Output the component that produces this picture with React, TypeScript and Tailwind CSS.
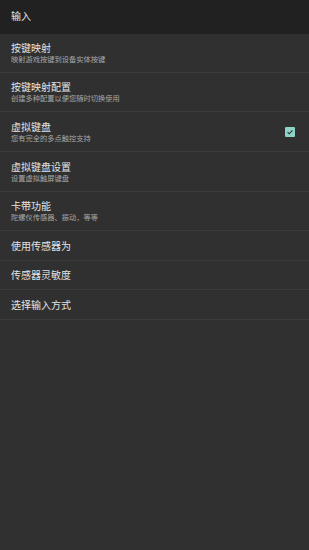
import React from 'react';

type Item = { title: string; subtitle?: string; checked?: boolean; h: string };

const items: Item[] = [
  { title: '按键映射', subtitle: '映射游戏按键到设备实体按键', h: 'h-[39px]' },
  { title: '按键映射配置', subtitle: '创建多种配置以便您随时切换使用', h: 'h-[39px]' },
  { title: '虚拟键盘', subtitle: '您有完全的多点触控支持', checked: true, h: 'h-[40px]' },
  { title: '虚拟键盘设置', subtitle: '设置虚拟触屏键盘', h: 'h-[40px]' },
  { title: '卡带功能', subtitle: '陀螺仪传感器、振动，等等', h: 'h-[39px]' },
  { title: '使用传感器为', h: 'h-[30px]' },
  { title: '传感器灵敏度', h: 'h-[29px]' },
  { title: '选择输入方式', h: 'h-[30px]' },
];

const font = { fontFamily: '"Noto Sans CJK SC", "Noto Sans", sans-serif' };

const App: React.FC = () => {
  return (
    <div className="w-[309px] h-[550px] bg-[#303030] flex flex-col" style={font}>
      <div className="h-[34px] shrink-0 bg-[#212121] flex items-center px-[11px] pb-[4px] text-[10px] text-[#e6e6e6]">
        输入
      </div>
      {items.map((item) => (
        <div
          key={item.title}
          className={`shrink-0 flex items-center justify-between pl-[11px] pr-[14px] border-b border-[#3c3c3c] ${item.h}`}
        >
          <div className="flex flex-col">
            <span className="text-[10px] leading-[12px] text-[#e4e4e4]">{item.title}</span>
            {item.subtitle && (
              <span className="text-[7.25px] leading-[10px] text-[#a8a8a8]">{item.subtitle}</span>
            )}
          </div>
          {item.checked && (
            <div className="w-[10px] h-[10px] rounded-[1px] bg-[#8fd3c8] flex items-center justify-center">
              <svg viewBox="0 0 10 10" className="w-[8px] h-[8px]">
                <path d="M2 5.2 L4.1 7.2 L8 3" stroke="#20302e" strokeWidth="1.3" fill="none" />
              </svg>
            </div>
          )}
        </div>
      ))}
    </div>
  );
};

export default App;
